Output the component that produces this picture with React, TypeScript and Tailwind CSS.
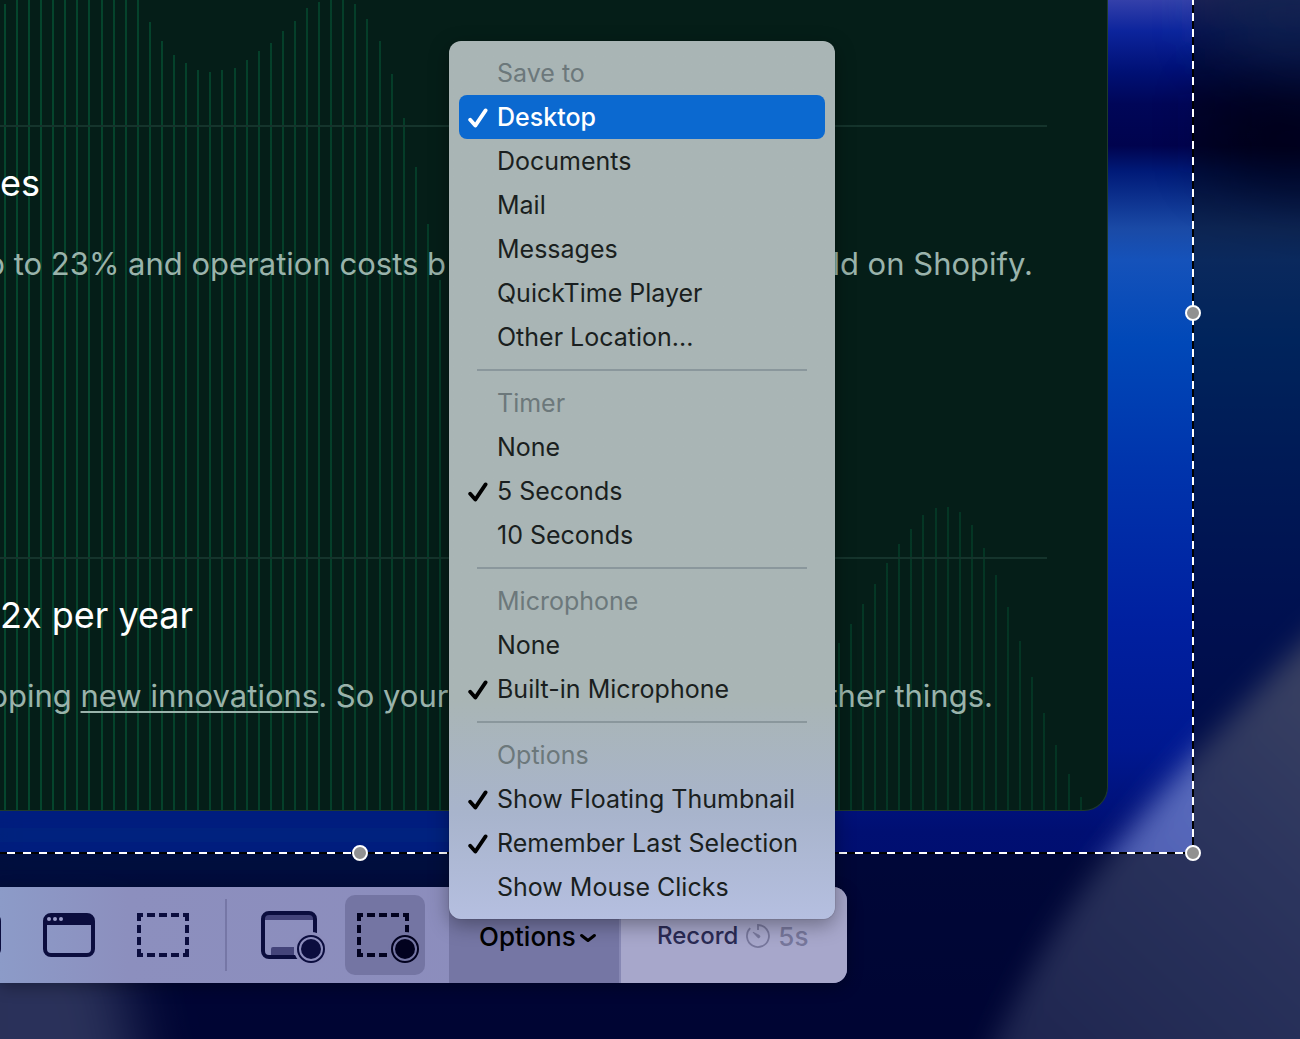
import { useState } from 'react';
import clsx from 'clsx';

const barTops: [number, number[]][] = [
  // [index of the first bar, top of each bar]
  [0, [
    4, 0, 0, 0, 0, 0, 0, 0, 0, 0, 0, 0, 22, 41, 55, 63, 70, 72, 70, 68, 60, 51, 43, 31, 21, 8, 2, 0, 0, 4, 19, 41,
    74, 118, 167, 224, 280,
  ]],
  [69, [643, 624, 604, 584, 563, 544, 529, 515, 508, 507, 512, 525, 548, 575, 607, 641, 677, 713, 745, 774, 797]],
];

const groups = [
  {
    title: 'Save to',
    multiple: false,
    items: ['Desktop', 'Documents', 'Mail', 'Messages', 'QuickTime Player', 'Other Location...'],
  },
  { title: 'Timer', multiple: false, items: ['None', '5 Seconds', '10 Seconds'] },
  { title: 'Microphone', multiple: false, items: ['None', 'Built-in Microphone'] },
  {
    title: 'Options',
    multiple: true,
    items: ['Show Floating Thumbnail', 'Remember Last Selection', 'Show Mouse Clicks'],
  },
];

function Wallpaper() {
  return (
    <svg
      className="absolute inset-0 h-full w-full"
      viewBox="0 0 1300 1039"
      preserveAspectRatio="none"
      aria-hidden="true"
    >
      <defs>
        <linearGradient id="sky" x1="0" y1="0" x2="0" y2="1">
          <stop offset="0" stopColor="#3440aa" />
          <stop offset="0.03" stopColor="#0c249c" />
          <stop offset="0.07" stopColor="#001074" />
          <stop offset="0.1" stopColor="#000658" />
          <stop offset="0.14" stopColor="#00034e" />
          <stop offset="0.165" stopColor="#001a78" />
          <stop offset="0.22" stopColor="#1a4aa6" />
          <stop offset="0.25" stopColor="#1552ba" />
          <stop offset="0.33" stopColor="#0048b8" />
          <stop offset="0.45" stopColor="#0034ac" />
          <stop offset="0.6" stopColor="#0020a0" />
          <stop offset="0.72" stopColor="#001890" />
          <stop offset="0.8" stopColor="#000f72" />
          <stop offset="1" stopColor="#000a66" />
        </linearGradient>
        <linearGradient id="dune" x1="1" y1="0" x2="0.3" y2="1">
          <stop offset="0" stopColor="#8894cc" />
          <stop offset="0.25" stopColor="#7080c4" />
          <stop offset="0.5" stopColor="#586abc" />
          <stop offset="1" stopColor="#3e4ca0" />
        </linearGradient>
        <filter id="soft" x="-50%" y="-50%" width="200%" height="200%">
          <feGaussianBlur stdDeviation="14" />
        </filter>
        <filter id="haze" x="-50%" y="-50%" width="200%" height="200%">
          <feGaussianBlur stdDeviation="30" />
        </filter>
      </defs>
      <rect width="1300" height="1039" fill="url(#sky)" />
      <path d="M1215 -30 L1340 -30 L1340 90 L1215 40 Z" fill="#24489c" opacity="0.7" filter="url(#haze)" />
      <path d="M1215 95 L1340 85 L1340 200 L1215 170 Z" fill="#000428" opacity="0.6" filter="url(#haze)" />
      <path d="M-40 790 H700 V880 H-40 Z" fill="#002080" filter="url(#haze)" />
      <path d="M-60 930 H110 L150 1120 H-60 Z" fill="#5464b4" filter="url(#haze)" />
      <path
        d="M970 1100 C1040 930 1110 850 1195 755 C1245 705 1280 660 1400 555 V1120 Z"
        fill="url(#dune)"
        filter="url(#soft)"
      />
    </svg>
  );
}

function Bars() {
  return (
    <svg className="absolute right-0 top-0 h-[811px] w-[1107px]" viewBox="0 0 1107 811" aria-hidden="true">
      <defs>
        <linearGradient id="bars" gradientUnits="userSpaceOnUse" x1="0" y1="0" x2="1107" y2="0">
          <stop offset="0" stopColor="#05462d" />
          <stop offset="0.4" stopColor="#053c28" />
          <stop offset="1" stopColor="#043423" />
        </linearGradient>
      </defs>
      {barTops.map(([first, tops]) =>
        tops.map((top, i) => (
          <rect
            key={first + i}
            x={Math.floor(4.35 + (first + i) * 12.087)}
            y={top}
            width="2"
            height={811 - top}
            fill="url(#bars)"
          />
        )),
      )}
    </svg>
  );
}

function Check() {
  return (
    <svg className="h-5 w-5" viewBox="0 0 20 20" fill="none" stroke="currentColor" aria-hidden="true">
      <path d="M2.2 11.8 L7.3 17.6 L17.6 2.4" strokeWidth="3.8" strokeLinecap="round" strokeLinejoin="round" />
    </svg>
  );
}

const icon = 'h-20 w-20';

function ScreenIcon() {
  return (
    <svg className={icon} viewBox="0 0 80 80" fill="none" aria-hidden="true">
      <rect x="16" y="20" width="48" height="40" rx="6" stroke="#0b0d3e" strokeWidth="4" />
    </svg>
  );
}

function WindowIcon() {
  return (
    <svg className={icon} viewBox="0 0 80 80" fill="none" aria-hidden="true">
      <rect x="16" y="20" width="48" height="40" rx="6" stroke="#0b0d3e" strokeWidth="4" />
      <path d="M15 30 V26 A7 7 0 0 1 22 19 H58 A7 7 0 0 1 65 26 V30 Z" fill="#0b0d3e" />
      <g fill="#9a9cc8">
        <circle cx="20" cy="24" r="2" />
        <circle cx="26" cy="24" r="2" />
        <circle cx="32" cy="24" r="2" />
      </g>
    </svg>
  );
}

function DashedFrame() {
  return (
    <path d="M14 18h6v4h-2v4h-4z M24 18h8v4h-8z M36 18h8v4h-8z M48 18h8v4h-8z M60 18h6v8h-4v-4h-2z M14 30h4v8h-4z M14 42h4v8h-4z M62 30h4v8h-4z M62 42h4v8h-4z M14 54h4v4h2v4h-6z M24 58h8v4h-8z M36 58h8v4h-8z M48 58h8v4h-8z M62 54h4v8h-6v-4h2z" />
  );
}

function SelectionIcon() {
  return (
    <svg className={icon} viewBox="0 0 80 80" fill="#0b0d3e" aria-hidden="true">
      <DashedFrame />
    </svg>
  );
}

function RecordScreenIcon() {
  return (
    <svg className={icon} viewBox="0 0 80 80" fill="none" aria-hidden="true">
      <path d="M14 20 H62 V25 H14 Z M20 54 A2 2 0 0 1 22 52 H43 V60 H20 Z" fill="#44447a" />
      <rect x="12" y="18" width="52" height="44" rx="6" stroke="#0b0d3e" strokeWidth="4" />
      <circle cx="60" cy="54" r="17" fill="#8c8dbc" />
      <circle cx="60" cy="54" r="13" stroke="#0b0d3e" strokeWidth="2" />
      <circle cx="60" cy="54" r="10" fill="#0b0d3e" />
    </svg>
  );
}

function RecordSelectionIcon() {
  return (
    <svg className={icon} viewBox="0 0 80 80" fill="#02021f" aria-hidden="true">
      <g transform="translate(-2 0)">
        <DashedFrame />
      </g>
      <circle cx="60" cy="54" r="17" fill="#7475a3" />
      <circle cx="60" cy="54" r="13" fill="none" stroke="#02021f" strokeWidth="2" />
      <circle cx="60" cy="54" r="10" />
    </svg>
  );
}

function TimerIcon() {
  return (
    <svg className="h-6 w-6" viewBox="0 0 24 24" fill="none" stroke="currentColor" aria-hidden="true">
      <path d="M12 6 V1 A11 11 0 1 1 4.2 4.2" strokeWidth="1.8" />
      <path d="M7 8.2 L13.6 11.4 A1.5 1.5 0 0 1 12 13.8 Z" fill="currentColor" strokeWidth="0.8" />
    </svg>
  );
}

function OptionsMenu() {
  const [checked, setChecked] = useState([['Desktop'], ['5 Seconds'], ['Built-in Microphone'], [
    'Show Floating Thumbnail',
    'Remember Last Selection',
  ]]);

  const toggle = (group: number, item: string) =>
    setChecked((prev) =>
      prev.map((names, i) => {
        if (i !== group) return names;
        if (!groups[group].multiple) return [item];
        return names.includes(item) ? names.filter((n) => n !== item) : [...names, item];
      }),
    );

  return (
    <div
      role="menu"
      aria-label="Options"
      className="absolute bottom-16 left-0 z-20 w-[386px] rounded-xl bg-linear-to-b from-[#a9b5b5] from-75% via-[#a8b4cc] via-88% to-[#b5bfe0] p-[10px] text-[25px] text-[#1a1f20] shadow-[0_6px_20px_rgba(0,0,0,0.35),0_0_1px_rgba(0,0,0,0.6)]"
    >
      {groups.map((group, g) => (
        <div key={group.title} role="group" aria-label={group.title}>
          {g > 0 && <hr className="mx-[18px] my-[10px] border-t-2 border-[#8a979c]" />}
          <div className="flex h-11 items-center pt-0.5 pl-[38px] text-[#6c787b]">{group.title}</div>
          {group.items.map((item) => {
            const on = checked[g].includes(item);
            return (
              <button
                key={item}
                type="button"
                role={group.multiple ? 'menuitemcheckbox' : 'menuitemradio'}
                aria-checked={on}
                onClick={() => toggle(g, item)}
                className={clsx(
                  'flex h-11 w-full items-center rounded-lg pt-0.5 pl-[9px] text-left whitespace-nowrap',
                  item === 'Desktop' && 'bg-[#0b69d0] font-medium text-white',
                )}
              >
                <span className={clsx('w-[29px]', item !== 'Desktop' && 'text-black')}>{on && <Check />}</span>
                {item}
              </button>
            );
          })}
        </div>
      ))}
    </div>
  );
}

function Toolbar() {
  return (
    <div
      role="toolbar"
      aria-label="Screen capture"
      className="relative z-10 mt-[34px] flex h-24 w-[847px] items-center rounded-r-[14px] bg-linear-to-r from-[#8c9bc8] via-[#8c8fbe] via-15% to-[#8c8bbb] shadow-[0_4px_16px_rgba(0,0,0,0.3)]"
    >
      <div className="-ml-[65px] flex gap-[14px]">
        <button type="button" aria-label="Capture entire screen"><ScreenIcon /></button>
        <button type="button" aria-label="Capture selected window"><WindowIcon /></button>
        <button type="button" aria-label="Capture selected portion"><SelectionIcon /></button>
      </div>
      <div className="mr-6 ml-[22px] h-[72px] w-[2px] bg-[#7677a6]" />
      <div className="flex gap-[14px]">
        <button type="button" aria-label="Record entire screen"><RecordScreenIcon /></button>
        <button type="button" aria-label="Record selected portion" aria-pressed="true" className="rounded-[10px] bg-[#7475a3]">
          <RecordSelectionIcon />
        </button>
      </div>
      <div className="relative ml-6 h-full">
        <button
          type="button"
          aria-haspopup="menu"
          aria-expanded="true"
          className="flex h-full w-[172px] items-center gap-1 border-r-2 border-[#8788b4] bg-[#7576a4] pt-0.5 pl-[30px] text-[26px] font-medium text-black"
        >
          Options
          <svg className="mt-1 h-4 w-4" viewBox="0 0 16 16" fill="none" stroke="currentColor" aria-hidden="true">
            <path d="M1.6 5.5 L8 10.5 L14.4 5.5" strokeWidth="3" strokeLinecap="round" strokeLinejoin="round" />
          </svg>
        </button>
        <OptionsMenu />
      </div>
      <button
        type="button"
        className="flex h-full flex-1 items-center gap-2 rounded-r-[14px] bg-[#a7a7cb] pt-0.5 pl-[36px] text-[24px] font-medium text-[#2b2b55]"
      >
        Record
        <span className="flex items-center gap-2 text-[26px] text-[#77779c]">
          <TimerIcon />
          5s
        </span>
      </button>
    </div>
  );
}

function Handle({ className }: { className: string }) {
  return <span className={clsx('absolute h-4 w-4 rounded-full border-2 border-white bg-[#919191]', className)} />;
}

export default function App() {
  return (
    <main className="relative min-h-screen overflow-hidden bg-[#000a40] font-['Inter',sans-serif]">
      <Wallpaper />
      <section className="relative mr-[107px] pb-[42px] shadow-[0_0_0_2000px_rgba(0,0,0,0.5)]">
        <article className="relative mr-[85px] overflow-hidden rounded-br-[24px] border-r border-b border-[#1f3a2c] bg-[#051e18] pt-[125px] pr-[60px] whitespace-nowrap">
          <Bars />
          <div className="relative border-t-2 border-[#15342c] pt-[34px] pb-[269px]">
            <h2 className="text-[36px] leading-[44px] text-white">es</h2>
            <p className="mt-[35px] -ml-[14px] flex justify-between pr-[14px] text-[31px] leading-[48px] text-[#9ab3ab]">
              <span>p to 23% and operation costs b</span>
              <span>ld on Shopify.</span>
            </p>
          </div>
          <div className="relative border-t-2 border-[#15342c] pt-[34px] pb-[90px]">
            <h2 className="text-[36px] leading-[44px] text-white">2x per year</h2>
            <p className="mt-[35px] -ml-[11px] flex justify-between pr-[54px] text-[31px] leading-[48px] text-[#9ab3ab]">
              <span>
                pping{' '}
                <a href="#innovations" className="underline decoration-2 underline-offset-4">new innovations</a>. So your
              </span>
              <span>ther things.</span>
            </p>
          </div>
        </article>
        <div className="absolute top-0 -right-px h-full w-[2px] bg-[repeating-linear-gradient(to_bottom,white_0_5px,black_5px_13px,white_13px_16px)]" />
        <div className="absolute -bottom-px left-0 h-[2px] w-full bg-[repeating-linear-gradient(to_right,black_0_7px,white_7px_15px,black_15px_16px)]" />
        <Handle className="top-[305px] -right-2" />
        <Handle className="-right-2 -bottom-2" />
        <Handle className="-bottom-2 left-[352px]" />
      </section>
      <Toolbar />
    </main>
  );
}
